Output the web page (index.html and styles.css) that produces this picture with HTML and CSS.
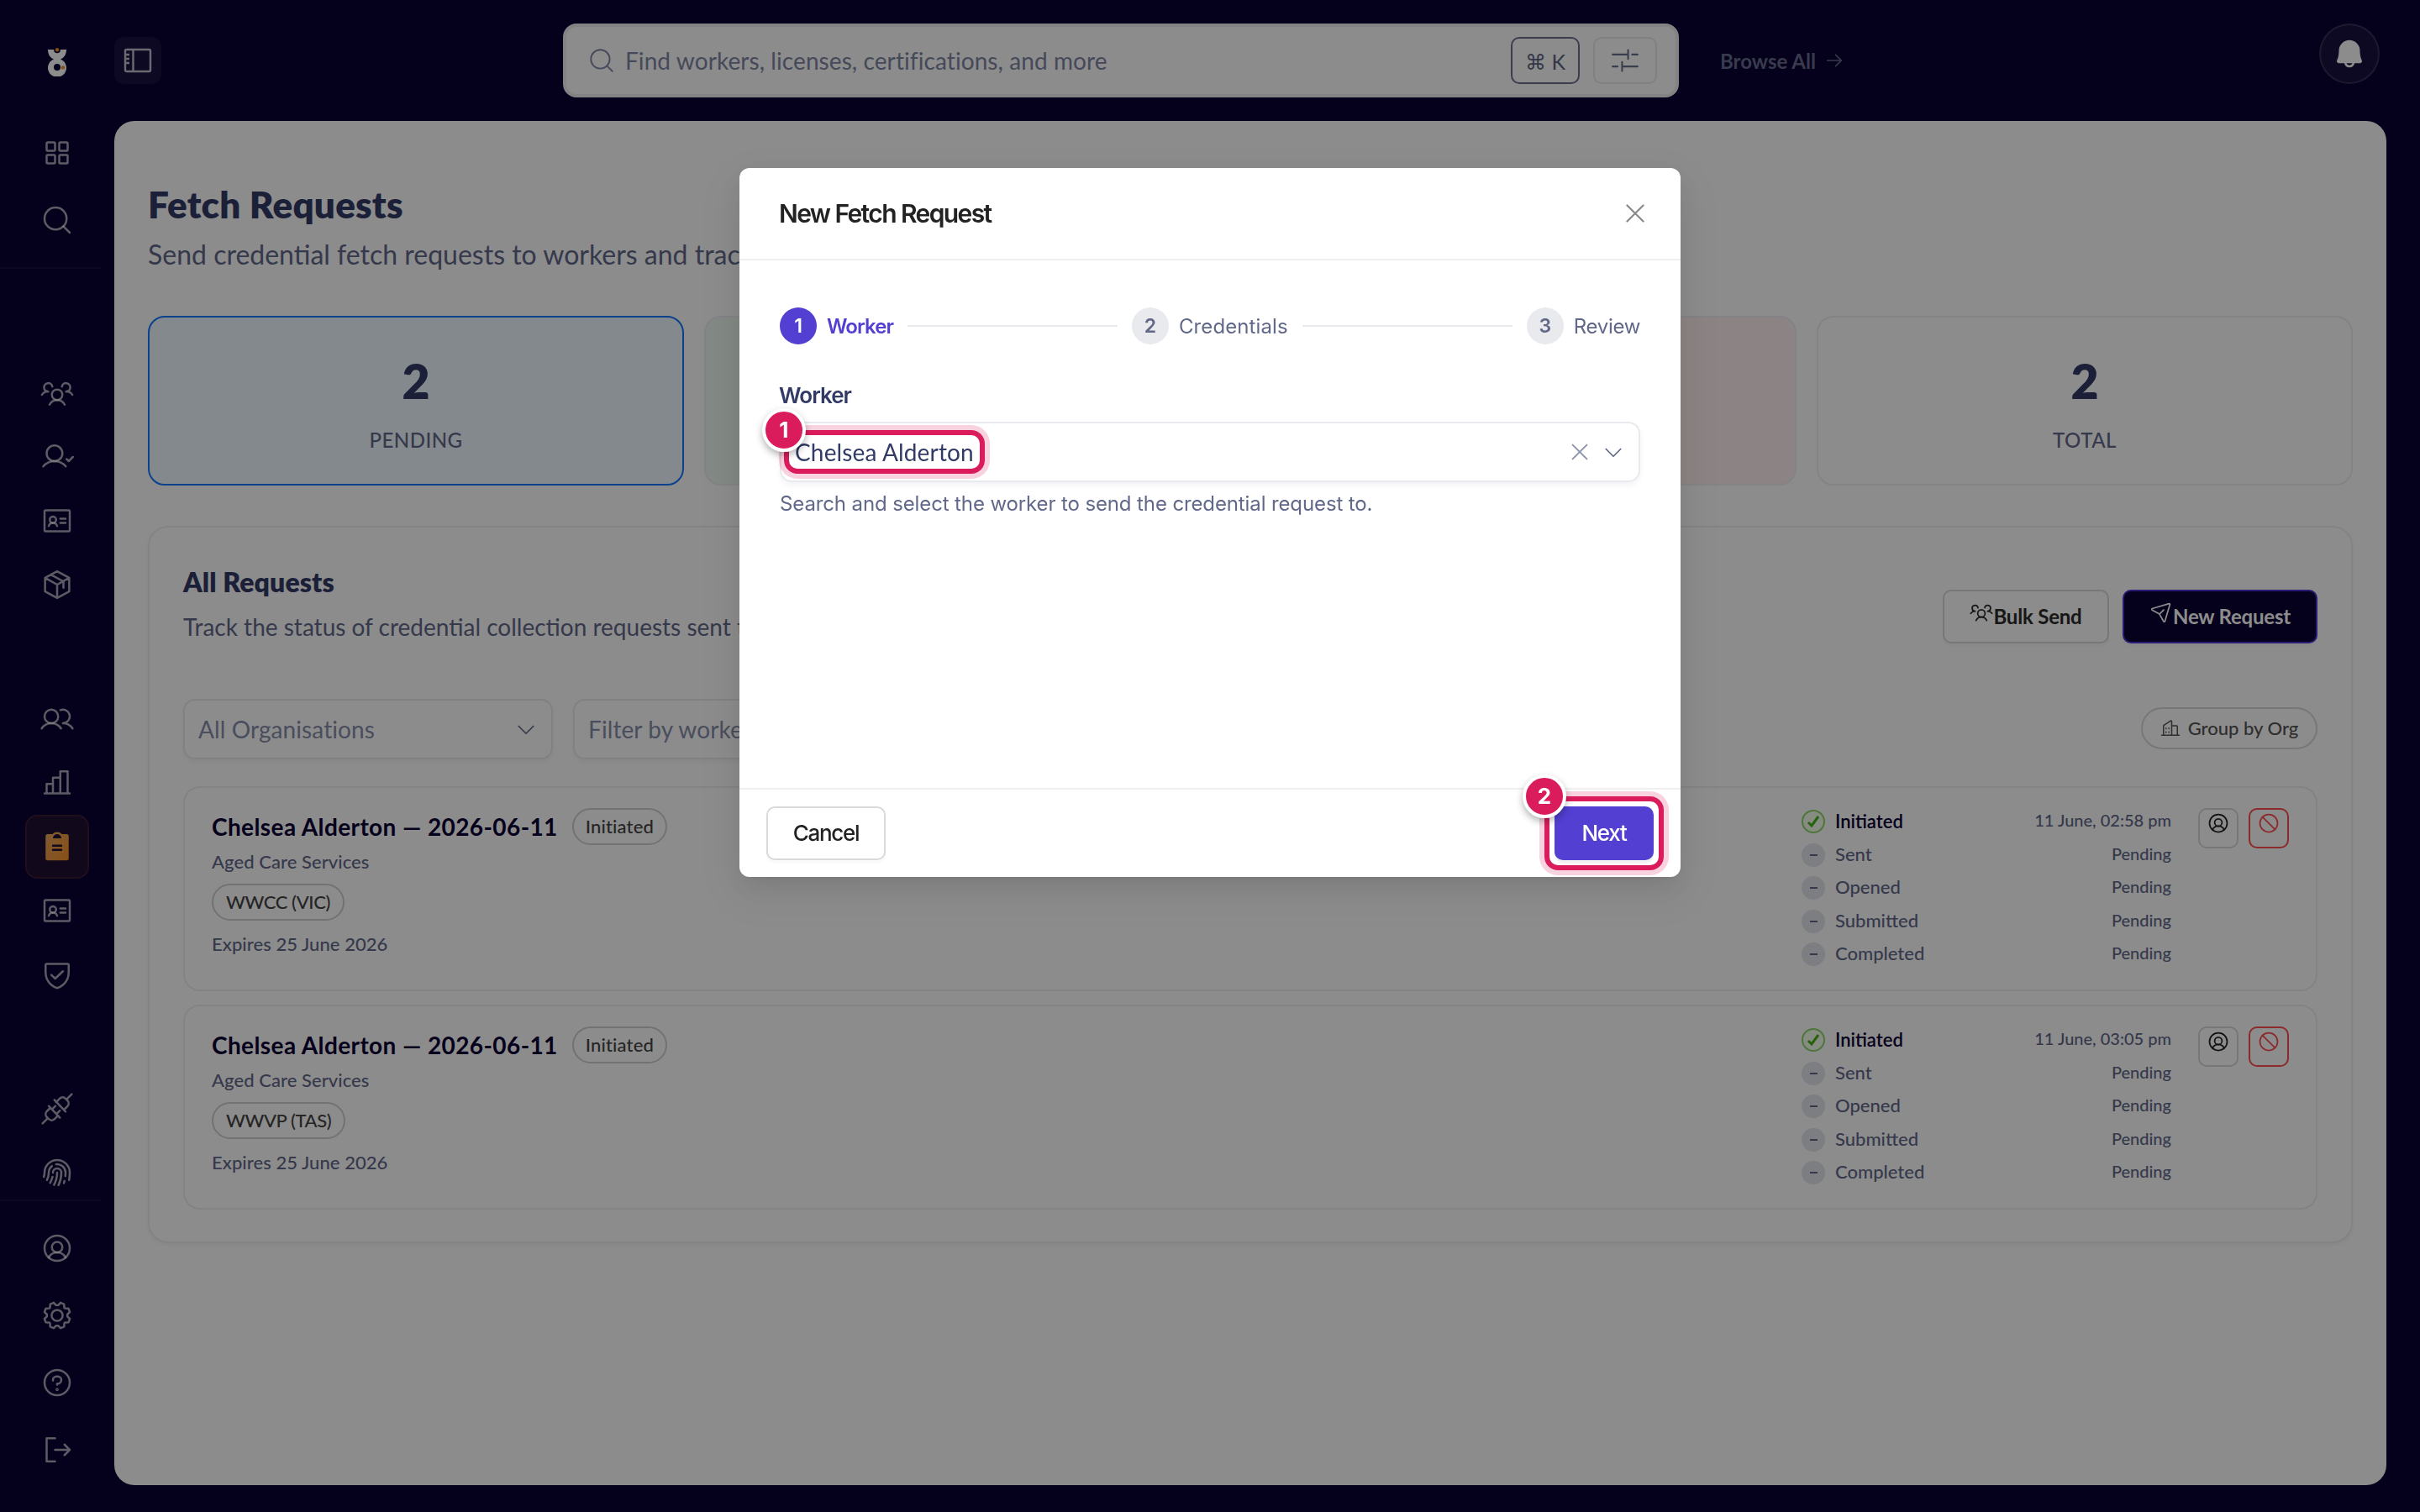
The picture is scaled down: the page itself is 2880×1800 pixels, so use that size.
FILE: index.html
```html
<!DOCTYPE html>
<html lang="en">
<head>
  <meta charset="UTF-8">
  <title>Fetch Requests</title>
  <meta name="viewport" content="width=device-width, initial-scale=1">
  <link rel="stylesheet" href="styles.css">
</head>
<body>

  <!-- icon sprite -->
  <svg class="sprite" xmlns="http://www.w3.org/2000/svg">
    <defs>
      <linearGradient id="amber" x1="0" y1="0" x2="1" y2="1">
        <stop offset="0" stop-color="#e8a860"/>
        <stop offset="1" stop-color="#f79027"/>
      </linearGradient>
    </defs>
    <symbol id="i-grid" viewBox="0 0 256 256"><rect x="48" y="48" width="64" height="64" rx="8"/><rect x="144" y="48" width="64" height="64" rx="8"/><rect x="48" y="144" width="64" height="64" rx="8"/><rect x="144" y="144" width="64" height="64" rx="8"/></symbol>
    <symbol id="i-search" viewBox="0 0 256 256"><circle cx="116" cy="116" r="84"/><path d="M175.4 175.4 224 224"/></symbol>
    <symbol id="i-team" viewBox="0 0 256 256"><circle cx="128" cy="140" r="40"/><path d="M196 116a59.8 59.8 0 0 1 48 24M12 140a59.8 59.8 0 0 1 48-24M70.4 216a64.1 64.1 0 0 1 115.2 0M60 116a32 32 0 1 1 31.4-38M164.6 78A32 32 0 1 1 196 116"/></symbol>
    <symbol id="i-user-check" viewBox="0 0 256 256"><circle cx="108" cy="100" r="60"/><path d="M22.2 200a112 112 0 0 1 171.6 0M200 144l16 16 32-32"/></symbol>
    <symbol id="i-card" viewBox="0 0 256 256"><rect x="32" y="48" width="192" height="160" rx="8"/><path d="M152 112h40M152 144h40M64 168c4-16 16-24 32-24s28 8 32 24"/><circle cx="96" cy="120" r="24"/></symbol>
    <symbol id="i-package" viewBox="0 0 256 256"><path d="M128 26l92 50v104l-92 50-92-50V76ZM36 76l92 52 92-52M128 128v102M81 52l95 52v48"/></symbol>
    <symbol id="i-users" viewBox="0 0 256 256"><circle cx="84" cy="108" r="52"/><path d="M10.2 200a88 88 0 0 1 147.6 0M172 160a87.9 87.9 0 0 1 73.8 40M152.7 59.7A52 52 0 1 1 172 160"/></symbol>
    <symbol id="i-chart" viewBox="0 0 256 256"><path d="M48 208v-72h48M96 208V88h56M152 208V40h56v168M32 208h192"/></symbol>
    <symbol id="i-clipboard" viewBox="0 0 256 256"><path fill="url(#amber)" stroke="none" fill-rule="evenodd" d="M200 32h-36.3a47.9 47.9 0 0 0-71.4 0H56a16 16 0 0 0-16 16v168a16 16 0 0 0 16 16h144a16 16 0 0 0 16-16V48a16 16 0 0 0-16-16Zm-72 0a32 32 0 0 1 32 32H96a32 32 0 0 1 32-32Zm32 128H96a8 8 0 0 1 0-16h64a8 8 0 0 1 0 16Zm0-32H96a8 8 0 0 1 0-16h64a8 8 0 0 1 0 16Z"/></symbol>
    <symbol id="i-shield" viewBox="0 0 256 256"><path d="M216 112V56a8 8 0 0 0-8-8H48a8 8 0 0 0-8 8v56c0 96 88 120 88 120s88-24 88-120ZM84 132l29 28 59-56"/></symbol>
    <symbol id="i-plugs" viewBox="0 0 256 256"><path d="M17 239l37-37M64 107l85 89M90 132l25-25M124 166l25-25M77 120l-27 27a32 32 0 0 0 0 45l14 14a32 32 0 0 0 45 0l27-27M239 17l-37 37M192 149l-85-89M179 136l27-27a32 32 0 0 0 0-45l-14-14a32 32 0 0 0-45 0l-27 27"/></symbol>
    <symbol id="i-finger" viewBox="0 0 256 256"><path d="M50.7 184.9A127.5 127.5 0 0 0 64 128a64 64 0 0 1 24-50M128 128a191.1 191.1 0 0 1-24 93M96 128a32 32 0 0 1 64 0 223.1 223.1 0 0 1-21.3 95.4M218.6 184a289.7 289.7 0 0 0 5.4-56 96 96 0 0 0-192 0 95.8 95.8 0 0 1-5.5 32M92.8 160a158.9 158.9 0 0 1-18.1 45.5M120 64.5a64 64 0 0 1 72 63.5 259 259 0 0 1-1.4 27M183.9 192c-1.3 5.4-2.8 10.7-4.4 16"/></symbol>
    <symbol id="i-profile" viewBox="0 0 256 256"><circle cx="128" cy="128" r="96"/><circle cx="128" cy="120" r="40"/><path d="M63.8 199.4a72 72 0 0 1 128.4 0"/></symbol>
    <symbol id="i-gear" viewBox="0 0 256 256"><circle cx="128" cy="128" r="42"/><path d="M120 50h16l18-19 27 11 1 26 6 6 26 1 11 27-19 18v16l19 18-11 27-26 1-6 6-1 26-27 11-18-19h-16l-18 19-27-11-1-26-6-6-26-1-11-27 19-18v-16l-19-18 11-27 26-1 6-6 1-26 27-11Z"/></symbol>
    <symbol id="i-help" viewBox="0 0 256 256"><circle cx="128" cy="128" r="96"/><path d="M128 144v-8c17.7 0 32-12.5 32-28s-14.3-28-32-28-32 12.5-32 28v4"/><circle cx="128" cy="180" r="4"/></symbol>
    <symbol id="i-exit" viewBox="0 0 256 256"><path d="M112 40H48v176h64M112 128h112M184 88l40 40-40 40"/></symbol>
    <symbol id="i-bell" viewBox="0 0 256 256"><path fill="currentColor" stroke="none" fill-rule="evenodd" d="M221.8 175.9C216.3 166.4 208 139.3 208 104a80 80 0 1 0-160 0c0 35.3-8.3 62.4-13.8 71.9A16 16 0 0 0 48 200h40.8a40 40 0 0 0 78.4 0H208a16 16 0 0 0 13.8-24.1ZM128 216a24 24 0 0 1-22.6-16h45.2A24 24 0 0 1 128 216Z"/></symbol>
    <symbol id="i-sliders" viewBox="0 0 256 256"><path d="M28 80h124M152 44v72M184 80h44M28 176h40M104 140v72M104 176h124"/></symbol>
    <symbol id="i-arrow" viewBox="0 0 256 256"><path d="M40 128h176M144 56l72 72-72 72"/></symbol>
    <symbol id="i-down" viewBox="0 0 256 256"><path d="M208 96l-80 80-80-80"/></symbol>
    <symbol id="i-close" viewBox="0 0 256 256"><path d="M200 56 56 200M56 56l144 144"/></symbol>
    <symbol id="i-plane" viewBox="0 0 256 256"><path d="M223 42l-54 183a8 8 0 0 1-15 1l-45-79-79-45a8 8 0 0 1 1-15L214 33a8 8 0 0 1 9 9ZM109 147l46-46"/></symbol>
    <symbol id="i-ban" viewBox="0 0 256 256"><circle cx="128" cy="128" r="96"/><path d="M60 60l136 136"/></symbol>
    <symbol id="i-building" viewBox="0 0 256 256"><path d="M16 216h224M144 216V40a8 8 0 0 0-12-7L44 90a8 8 0 0 0-4 7v119M144 96h64a8 8 0 0 1 8 8v112M72 124v8M108 124v8M72 172v8M108 172v8"/></symbol>
    <symbol id="i-check" viewBox="0 0 28 28"><path d="M8 15l4 4 8-11"/></symbol>
  </svg>

  <div class="app">
    <aside class="sidebar">
      <div class="logo">
        <svg width="22" height="34" viewBox="0 0 22 34">
          <path fill="#fff" d="M0 2h22c0 6-3 10-7 11.500A11 11 0 1 1 7 13.500C3 12 0 8 0 2Z"/>
          <circle cx="11" cy="23" r="4" fill="#0a0033"/>
          <circle cx="11" cy="2.500" r="3.800" fill="#0a0033"/>
          <circle cx="11" cy="2.200" r="2.200" fill="#f79027"/>
          <circle cx="18" cy="23.400" r="2.200" fill="#f79027"/>
        </svg>
      </div>
      <nav class="nav-top">
        <a><svg class="icon"><use href="#i-grid"/></svg></a>
        <a><svg class="icon"><use href="#i-search"/></svg></a>
      </nav>
      <nav class="nav-group">
        <a><svg class="icon"><use href="#i-team"/></svg></a>
        <a><svg class="icon"><use href="#i-user-check"/></svg></a>
        <a><svg class="icon"><use href="#i-card"/></svg></a>
        <a><svg class="icon"><use href="#i-package"/></svg></a>
      </nav>
      <nav class="nav-group">
        <a><svg class="icon"><use href="#i-users"/></svg></a>
        <a><svg class="icon"><use href="#i-chart"/></svg></a>
        <a class="active"><svg class="icon"><use href="#i-clipboard"/></svg></a>
        <a><svg class="icon"><use href="#i-card"/></svg></a>
        <a><svg class="icon"><use href="#i-shield"/></svg></a>
      </nav>
      <nav class="nav-group">
        <a><svg class="icon"><use href="#i-plugs"/></svg></a>
        <a><svg class="icon"><use href="#i-finger"/></svg></a>
      </nav>
      <nav class="nav-bottom">
        <a><svg class="icon"><use href="#i-profile"/></svg></a>
        <a><svg class="icon"><use href="#i-gear"/></svg></a>
        <a><svg class="icon"><use href="#i-help"/></svg></a>
        <a><svg class="icon"><use href="#i-exit"/></svg></a>
      </nav>
    </aside>

    <div class="main">
      <header class="topbar">
        <button class="toggle">
          <svg width="34" height="30" viewBox="0 0 34 30"><rect x="2" y="2" width="30" height="26" rx="1.500"/><path d="M11.500 2v26M3 8h4M3 13h4M3 18h4"/></svg>
        </button>
        <div class="search">
          <svg class="icon"><use href="#i-search"/></svg>
          <span class="search-text">Find workers, licenses, certifications, and more</span>
          <kbd>⌘ K</kbd>
          <button class="tune"><svg class="icon"><use href="#i-sliders"/></svg></button>
        </div>
        <a class="browse">Browse All <svg class="icon"><use href="#i-arrow"/></svg></a>
        <button class="bell"><svg class="icon"><use href="#i-bell"/></svg></button>
      </header>

      <main class="panel">
        <h1>Fetch Requests</h1>
        <p class="lead">Send credential fetch requests to workers and track their progress.</p>

        <div class="stats">
          <div class="stat selected"><strong>2</strong><span>PENDING</span></div>
          <div class="stat green"><strong>0</strong><span>COMPLETED</span></div>
          <div class="stat red"><strong>0</strong><span>EXPIRED</span></div>
          <div class="stat"><strong>2</strong><span>TOTAL</span></div>
        </div>

        <section class="requests">
          <div class="requests-head">
            <div class="requests-title">
              <h2>All Requests</h2>
              <p>Track the status of credential collection requests sent to workers.</p>
            </div>
            <button class="btn"><svg class="icon"><use href="#i-team"/></svg>Bulk Send</button>
            <button class="btn btn-dark"><svg class="icon"><use href="#i-plane"/></svg>New Request</button>
          </div>

          <div class="filters">
            <div class="select">All Organisations <svg class="icon"><use href="#i-down"/></svg></div>
            <div class="select">Filter by worker <svg class="icon"><use href="#i-down"/></svg></div>
            <button class="group-btn"><svg class="icon"><use href="#i-building"/></svg>Group by Org</button>
          </div>

          <article class="request">
            <div class="request-info">
              <div class="request-name"><h3>Chelsea Alderton — 2026-06-11</h3><span class="pill">Initiated</span></div>
              <p>Aged Care Services</p>
              <span class="pill pill-type">WWCC (VIC)</span>
              <p>Expires 25 June 2026</p>
            </div>
            <ul class="timeline">
              <li class="done"><i><svg><use href="#i-check"/></svg></i>Initiated<time>11 June, 02:58 pm</time></li>
              <li><i></i>Sent<time>Pending</time></li>
              <li><i></i>Opened<time>Pending</time></li>
              <li><i></i>Submitted<time>Pending</time></li>
              <li><i></i>Completed<time>Pending</time></li>
            </ul>
            <div class="actions">
              <button><svg class="icon"><use href="#i-profile"/></svg></button>
              <button class="danger"><svg class="icon"><use href="#i-ban"/></svg></button>
            </div>
          </article>

          <article class="request">
            <div class="request-info">
              <div class="request-name"><h3>Chelsea Alderton — 2026-06-11</h3><span class="pill">Initiated</span></div>
              <p>Aged Care Services</p>
              <span class="pill pill-type">WWVP (TAS)</span>
              <p>Expires 25 June 2026</p>
            </div>
            <ul class="timeline">
              <li class="done"><i><svg><use href="#i-check"/></svg></i>Initiated<time>11 June, 03:05 pm</time></li>
              <li><i></i>Sent<time>Pending</time></li>
              <li><i></i>Opened<time>Pending</time></li>
              <li><i></i>Submitted<time>Pending</time></li>
              <li><i></i>Completed<time>Pending</time></li>
            </ul>
            <div class="actions">
              <button><svg class="icon"><use href="#i-profile"/></svg></button>
              <button class="danger"><svg class="icon"><use href="#i-ban"/></svg></button>
            </div>
          </article>
        </section>
      </main>
    </div>
  </div>

  <div class="backdrop">
    <div class="modal">
      <div class="modal-head">
        <h2>New Fetch Request</h2>
        <svg class="icon"><use href="#i-close"/></svg>
      </div>
      <div class="modal-body">
        <div class="steps">
          <div class="step current"><b>1</b>Worker</div>
          <hr>
          <div class="step"><b>2</b>Credentials</div>
          <hr>
          <div class="step"><b>3</b>Review</div>
        </div>
        <label>Worker</label>
        <div class="field">
          <span class="mark">Chelsea Alderton<em>1</em></span>
          <svg class="icon clear"><use href="#i-close"/></svg>
          <svg class="icon"><use href="#i-down"/></svg>
        </div>
        <p class="hint">Search and select the worker to send the credential request to.</p>
      </div>
      <div class="modal-foot">
        <button class="cancel">Cancel</button>
        <div class="mark mark-btn"><button class="next">Next</button><em>2</em></div>
      </div>
    </div>
  </div>

</body>
</html>
```
FILE: styles.css
```css
* { box-sizing: border-box; margin: 0; padding: 0; }

body {
  font-family: Lato, "Open Sans", sans-serif;
  background: #0a0033;
  color: #323b66;
  height: 1800px;
  overflow: hidden;
}
button {
  font: inherit;
  display: flex;
  align-items: center;
  justify-content: center;
}
.sprite { position: absolute; width: 0; height: 0; }
.icon {
  display: block;
  width: 40px; height: 40px;
  fill: none;
  stroke: currentColor;
  stroke-width: 16;
  stroke-linecap: round;
  stroke-linejoin: round;
  flex: none;
}

.app {
  display: grid;
  grid-template-columns: 136px 1fr;
  height: 1800px;
}

/* sidebar */
.sidebar { color: rgba(255,255,255,0.65); }
.sidebar a {
  display: flex;
  align-items: center;
  justify-content: center;
  width: 76px; height: 76px;
  margin: 0 auto;
}
.logo {
  height: 142px;
  padding-top: 57px;
  display: flex;
  justify-content: center;
}
.nav-top, .nav-bottom { width: 120px; padding-left: 30px; }
.nav-top a, .nav-bottom a { height: 80px; margin: 0; }
.nav-top {
  padding-bottom: 16px;
  border-bottom: 2px solid rgba(255,255,255,0.07);
  margin-bottom: 110px;
}
.nav-group { margin-bottom: 84px; }
.nav-group:nth-of-type(4) { margin-bottom: -6px; }
.nav-bottom {
  border-top: 2px solid rgba(255,255,255,0.07);
  padding-top: 16px;
}
.sidebar a.active {
  background: rgba(255,150,60,0.1);
  border: 2px solid rgba(255,150,60,0.1);
  border-radius: 14px;
}

/* top bar */
.topbar {
  height: 144px;
  display: flex;
  align-items: center;
}
.toggle {
  width: 56px; height: 56px;
  border: none; border-radius: 12px;
  background: rgba(255,255,255,0.07);
}
.toggle svg {
  fill: none;
  stroke: #c4c2cc;
  stroke-width: 2.4;
}
.search {
  width: 1328px; height: 88px;
  margin-left: 478px;
  padding: 0 22px 0 25px;
  border: 4px solid #eeeef1;
  border-radius: 16px;
  background: #fff;
  display: flex;
  align-items: center;
  color: #7f86a3;
}
.search .icon { width: 34px; height: 34px; stroke-width: 14; }
.search-text { font-size: 28px; letter-spacing: 0.08px; margin-left: 11px; flex: 1; }
.search kbd {
  font-family: Lato, "DejaVu Sans", sans-serif;
  font-size: 25px;
  width: 82px; height: 56px; line-height: 54px;
  text-align: center;
  border: 2px solid #6a708f;
  border-radius: 10px;
  color: #5f6582;
}
.tune {
  width: 76px; height: 56px;
  margin-left: 16px;
  border: 2px solid #eaeaee;
  border-radius: 10px;
  background: #fff;
  color: #6a708f;
}
.search .tune .icon { width: 38px; height: 38px; stroke-width: 14; }
.browse {
  display: flex;
  align-items: center;
  gap: 10px;
  margin-left: 49px;
  font-size: 24px;
  font-weight: 700;
  color: #666c8c;
}
.browse .icon { width: 24px; height: 24px; stroke-width: 18; }
.bell {
  width: 72px; height: 72px;
  margin: 0 48px 16px auto;
  border: 2px solid rgba(255,255,255,0.12);
  border-radius: 50%;
  background: rgba(255,255,255,0.07);
  color: #fff;
}

/* content */
.panel {
  width: 2704px; height: 1624px;
  padding: 71px 40px 0;
  border-radius: 24px;
  background: #fff;
}
h1 { font-size: 44px; line-height: 56px; font-weight: 800; letter-spacing: 0.2px; }
.lead {
  margin: 8px 0 49px;
  font-size: 32px;
  line-height: 48px;
  color: #626889;
}
.stats {
  display: grid;
  grid-template-columns: repeat(4, 1fr);
  gap: 24px;
  margin-bottom: 48px;
}
.stat {
  height: 202px;
  padding-top: 43px;
  border: 2px solid #eeeff2;
  border-radius: 20px;
  text-align: center;
}
.stat strong { display: block; font-size: 57px; line-height: 64px; font-weight: 800; }
.stat span {
  display: block;
  margin-top: 23px;
  font-size: 24px;
  line-height: 32px;
  font-weight: 500;
  letter-spacing: 0.5px;
  color: #626889;
}
.stat.selected { background: #eff9ff; border-color: #1677ff; }
.stat.green { background: #eefaf1; }
.stat.red { background: #fff1f0; }

.requests {
  height: 854px;
  padding: 40px;
  border: 2px solid #eeeff2;
  border-radius: 24px;
  box-shadow: 0 2px 4px rgba(0,0,0,0.05);
}
.requests-head {
  display: flex;
  align-items: center;
  gap: 16px;
  height: 132px;
  margin-bottom: 32px;
}
.requests-title { flex: 1; align-self: flex-start; padding-top: 4px; }
.requests-title h2 { font-size: 32px; line-height: 42px; font-weight: 800; letter-spacing: 0.1px; }
.requests-title p { font-size: 28px; line-height: 40px; margin-top: 12px; color: #626889; }
.btn {
  width: 198px; height: 64px;
  padding-bottom: 2px;
  border: 2px solid #d9d9d9;
  border-radius: 10px;
  background: #fff;
  box-shadow: 0 4px 0 rgba(0,0,0,0.02);
  font-size: 24px;
  font-weight: 700;
  letter-spacing: -0.2px;
  color: #2a2a2a;
}
.btn .icon { width: 28px; height: 28px; margin-bottom: 8px; }
.btn-dark {
  width: 232px;
  background: #0a0033;
  border-color: #4e30d8;
  color: #fff;
}

.filters {
  display: flex;
  align-items: center;
  gap: 24px;
  height: 72px;
  margin-bottom: 32px;
}
.select {
  display: flex;
  align-items: center;
  justify-content: space-between;
  width: 440px; height: 72px;
  padding: 0 16px;
  border: 2px solid #eaebef;
  border-radius: 14px;
  box-shadow: 0 3px 4px rgba(30,30,80,0.05);
  font-size: 28px;
  letter-spacing: 0.1px;
  color: #868da9;
}
.select .icon { width: 28px; height: 28px; color: #626889; }
.group-btn {
  width: 210px; height: 50px;
  margin: 0 0 2px auto;
  padding-bottom: 1px;
  gap: 9px;
  border: 2px solid #d9d9d9;
  border-radius: 25px;
  background: #fff;
  font-size: 22px;
  font-weight: 500;
  color: #555;
}
.group-btn .icon { width: 24px; height: 24px; }

.request {
  display: flex;
  height: 244px;
  margin-bottom: 16px;
  padding: 24px 32px;
  border: 2px solid #eeeff2;
  border-radius: 20px;
  font-size: 22px;
  font-weight: 500;
  color: #626889;
}
.request-info { flex: 1; }
.request-name { display: flex; align-items: center; gap: 17px; }
.request h3 { font-size: 28px; letter-spacing: 0.4px; color: #0a0033; }
.request-info p { line-height: 28px; margin-top: 6px; letter-spacing: 0.06px; }
.pill {
  display: inline-block;
  height: 44px; line-height: 40px;
  padding: 0 14px;
  border: 2px solid #d0d0d2;
  border-radius: 22px;
  letter-spacing: 0.15px;
  color: #444;
}
.pill-type { margin-top: 12px; padding: 0 15px; letter-spacing: -0.4px; }
.request-info .pill-type + p { margin-top: 14px; }

.timeline {
  list-style: none;
  width: 440px;
  padding-top: 2px;
  margin-right: 32px;
}
.timeline li {
  display: flex;
  height: 28px;
  line-height: 25px;
  margin-bottom: 11.5px;
}
.timeline i {
  width: 28px; height: 28px;
  margin-right: 12px;
  border-radius: 50%;
  background: #e3e5ec;
  display: flex;
  align-items: center;
  justify-content: center;
}
.timeline i::before { content: ''; width: 9px; height: 2px; background: #626889; }
.timeline time { margin-left: auto; font-size: 20px; }
.timeline .done { color: #0a0033; font-weight: 600; line-height: 27px; }
.timeline .done i { background: #f6ffed; border: 2px solid #8fd66a; }
.timeline .done i::before { display: none; }
.timeline .done svg {
  width: 28px; height: 28px;
  flex: none;
  fill: none;
  stroke: #46b314;
  stroke-width: 3;
}
.timeline .done time { color: #626889; font-weight: 500; line-height: 25px; }

.actions { display: flex; gap: 12px; }
.actions button {
  width: 48px; height: 48px;
  align-items: flex-start;
  padding-top: 2px;
  border: 2px solid #d9d9d9;
  border-radius: 10px;
  background: #fff;
  color: #222;
}
.actions .icon { width: 28px; height: 28px; }
.actions .danger { border-color: #ff4d4f; color: #ff4d4f; }

/* modal */
.backdrop {
  position: fixed;
  inset: 0;
  padding-top: 200px;
  background: rgba(0,0,0,0.45);
}
.modal {
  width: 1120px; height: 844px;
  margin: 0 auto;
  display: flex;
  flex-direction: column;
  border-radius: 12px;
  background: #fff;
  box-shadow: 0 12px 32px rgba(0,0,0,0.08), 0 6px 12px -8px rgba(0,0,0,0.12), 0 18px 56px 16px rgba(0,0,0,0.05);
  font-family: Inter, sans-serif;
}
.modal-head {
  display: flex;
  align-items: center;
  justify-content: space-between;
  height: 110px;
  padding: 0 37px 0 47px;
  border-bottom: 2px solid #f0f0f0;
  color: #222;
}
.modal-head h2 { font-size: 30px; font-weight: 600; letter-spacing: -1.6px; }
.modal-head .icon { width: 34px; height: 34px; stroke-width: 16; color: #888; }
.modal-body { flex: 1; padding: 56px 48px 0; }
.steps { display: flex; align-items: center; gap: 17px; }
.steps hr { flex: 1; height: 2px; border: none; background: #e9eaee; }
.step {
  display: flex;
  align-items: center;
  gap: 12px;
  font-size: 24px;
  letter-spacing: 0.1px;
  color: #626889;
}
.step:last-child { letter-spacing: -0.3px; }
.step b {
  width: 44px; height: 44px; line-height: 44px;
  border-radius: 50%;
  background: #e9eaee;
  text-align: center;
  font-size: 23px;
  font-weight: 600;
}
.step.current { color: #533fd1; font-weight: 600; letter-spacing: -0.94px; }
.step.current b { background: #533fd1; color: #fff; letter-spacing: 0; }
label {
  display: block;
  margin: 43px 0 13px -1px;
  font-size: 26px;
  line-height: 36px;
  font-weight: 600;
  letter-spacing: -0.95px;
}
.field {
  display: flex;
  align-items: center;
  height: 72px;
  padding: 0 16px 0 16px;
  border: 2px solid #e9eaee;
  border-radius: 14px;
  box-shadow: 0 4px 6px rgba(30,30,80,0.05);
  font-family: Lato, sans-serif;
  font-size: 28px;
  letter-spacing: 0.15px;
}
.field .icon { width: 28px; height: 28px; color: #626889; }
.field .clear { margin: 0 11px 0 auto; width: 30px; height: 30px; color: #8c92ad; }
.hint {
  margin-top: 10px;
  font-size: 24px;
  line-height: 32px;
  letter-spacing: -0.12px;
  color: #626889;
}
.modal-foot {
  display: flex;
  align-items: center;
  justify-content: space-between;
  height: 106px;
  padding: 0 32px;
  border-top: 2px solid #f0f0f0;
}
.modal-foot button {
  height: 64px;
  padding-bottom: 1px;
  border-radius: 10px;
  font-size: 26px;
  font-weight: 500;
  letter-spacing: -1.3px;
}
.cancel {
  width: 142px;
  border: 2px solid #d9d9d9;
  background: #fff;
  color: #222;
  box-shadow: 0 4px 0 rgba(0,0,0,0.02);
}
.next {
  width: 118px;
  border: none;
  background: #533fd1;
  color: #fff;
  box-shadow: 0 4px 0 rgba(0,0,0,0.05);
}

/* numbered call-outs */
.mark { position: relative; }
.mark::after {
  content: '';
  position: absolute;
  inset: -9px -13px;
  border: 6px solid #db1c5c;
  border-radius: 16px;
  box-shadow: 0 0 0 6px rgba(219,28,92,0.2);
}
.mark-btn::after { inset: -12px; }
.mark em {
  position: absolute;
  z-index: 1;
  top: -35px; left: -39px;
  width: 52px; height: 52px;
  border: 4px solid #fff;
  border-radius: 50%;
  background: #db1c5c;
  box-shadow: 0 4px 8px rgba(0,0,0,0.3);
  color: #fff;
  font: 700 26px/44px Inter, sans-serif;
  text-align: center;
}
.mark-btn em { top: -38px; left: -38px; }
```
